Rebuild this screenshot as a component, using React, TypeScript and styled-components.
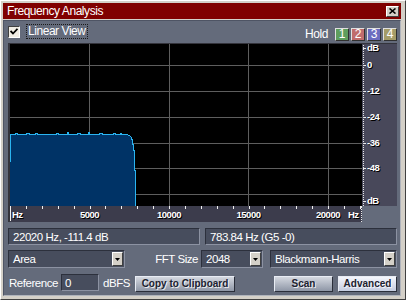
import styled, { createGlobalStyle } from "styled-components";

const SANS = `"Liberation Sans", Arial, sans-serif`;

const GlobalStyle = createGlobalStyle`
  html, body {
    margin: 0;
    padding: 0;
    background: #d4d0c8;
    overflow: hidden;
  }
  * {
    box-sizing: border-box;
  }
`;

const Window = styled.div`
  width: 406px;
  height: 300px;
  background: #d4d0c8;
  border: 1px solid;
  border-color: #ffffff #404040 #404040 #ffffff;
  padding: 2px 4px 3px 2px;
  display: flex;
  flex-direction: column;
  font-family: ${SANS};
  font-size: 11.5px;
  letter-spacing: -0.45px;
`;

const TitleBar = styled.div`
  height: 16px;
  flex: none;
  margin-bottom: 1px;
  padding: 0 2px 0 4px;
  background: #800000;
  color: #ffffff;
  font-size: 12px;
  display: flex;
  align-items: center;
  justify-content: space-between;
`;

const CloseButton = styled.div`
  width: 13px;
  height: 11px;
  background: #d4d0c8;
  border: 1px solid;
  border-color: #ffffff #404040 #404040 #ffffff;
  display: flex;
  align-items: center;
  justify-content: center;
`;

const Body = styled.div`
  flex: 1;
  background: #646b7b;
  border: 1px solid;
  border-color: #4e5464 #b0b4bc #b0b4bc #4e5464;
  padding: 2px 3px 2px 4px;
  display: flex;
  flex-direction: column;
  color: #ffffff;
`;

const TopRow = styled.div`
  height: 20px;
  flex: none;
  display: flex;
  justify-content: space-between;
  align-items: flex-start;
`;

const CheckWrap = styled.div`
  display: flex;
  align-items: center;
  margin-top: 1px;
`;

const Checkbox = styled.div`
  width: 12px;
  height: 12px;
  background: #f0ece4;
  border: 1px solid;
  border-color: #404040 #ffffff #ffffff #404040;
  display: flex;
  align-items: center;
  justify-content: center;
`;

const FocusLabel = styled.span`
  margin-left: 6px;
  padding: 0 2px 0 2px;
  height: 15px;
  line-height: 14px;
  font-size: 12px;
  outline: 1px dotted #1a1a1a;
  outline-offset: -1px;
`;

const HoldGroup = styled.div`
  display: flex;
  align-items: center;
  gap: 2px;
  margin-top: 4px;
`;

const HoldLabel = styled.span`
  margin-right: 5px;
  font-size: 12px;
`;

const holdColors: Record<string, string> = {
  green: "#5e9e5e",
  red: "#c06c6c",
  blue: "#6c6cc0",
  yellow: "#a49c68",
};

const HoldButton = styled.div<{ $color: string }>`
  width: 14px;
  height: 13px;
  background: ${(p) => holdColors[p.$color]};
  border: 1px solid;
  border-color: #e0e0e0 #303030 #303030 #e0e0e0;
  font-size: 12px;
  line-height: 11px;
  letter-spacing: 0;
  text-align: center;
`;

const Graph = styled.div`
  flex: none;
  display: grid;
  grid-template-columns: 354px 35px;
  grid-template-rows: 163px 16px;
`;

const Plot = styled.div`
  background: #000000;
  border-left: 2px solid #34343c;
  border-top: 1px solid #34343c;
  line-height: 0;
`;

const DbAxis = styled.div`
  position: relative;
  background: #48485a;
  border-top: 1px solid #34343c;
  &::before {
    content: "";
    position: absolute;
    left: 1px;
    top: 1px;
    bottom: 0;
    border-left: 1px dotted #e8e8e8;
  }
`;

const AxisText = styled.span`
  position: absolute;
  height: 10px;
  line-height: 10px;
  font-weight: bold;
  font-size: 9.5px;
  letter-spacing: -0.5px;
  color: #ffffff;
  text-shadow: 1px 1px 0 #000000;
  white-space: nowrap;
`;

const DbTick = styled.span`
  position: absolute;
  left: 1px;
  width: 3px;
  height: 1px;
  background: #e8e8e8;
`;

const HzAxis = styled.div`
  position: relative;
  background: #3c3c4c;
  border-left: 2px solid #34343c;
  &::after {
    content: "";
    position: absolute;
    right: 0;
    top: 0;
    bottom: 0;
    border-left: 1px dotted #e8e8e8;
  }
`;

const HzTick = styled.span<{ $long?: boolean }>`
  position: absolute;
  top: 0;
  width: 1px;
  height: ${(p) => (p.$long ? "15px" : "3px")};
  background: #f0f0f0;
`;

const Readouts = styled.div`
  margin-top: 6px;
  display: grid;
  grid-template-columns: 1fr 1fr;
  gap: 5px;
`;

const Sunken = styled.div`
  background: #474d5d;
  border: 1px solid;
  border-color: #2c303c #8c92a2 #8c92a2 #2c303c;
  display: flex;
  align-items: center;
  padding-left: 4px;
  color: #ffffff;
`;

const Readout = styled(Sunken)`
  height: 17px;
  padding-left: 4px;
`;

const OptionsRow = styled.div`
  margin-top: 5px;
  height: 18px;
  display: flex;
  align-items: center;
`;

const Select = styled(Sunken)<{ $w: number }>`
  width: ${(p) => p.$w}px;
  flex: none;
  height: 18px;
  justify-content: space-between;
  padding-right: 1px;
`;

const DropArrow = styled.div`
  width: 11px;
  height: 14px;
  background: #d4d0c8;
  border: 1px solid;
  border-color: #ffffff #404040 #404040 #ffffff;
  display: flex;
  align-items: center;
  justify-content: center;
`;

const Spacer = styled.div`
  flex: 1;
`;

const FieldLabel = styled.span`
  margin-right: 3px;
`;

const BottomRow = styled.div`
  margin-top: 4px;
  height: 21px;
  display: flex;
  align-items: center;
  padding-left: 1px;
`;

const NumberInput = styled(Sunken)`
  width: 38px;
  height: 17px;
  padding-left: 3px;
  margin-left: 3px;
`;

const Unit = styled.span`
  margin: 0 5px 0 4px;
`;

const Button = styled.div<{ $w: number; $active?: boolean }>`
  width: ${(p) => p.$w}px;
  flex: none;
  height: 16px;
  margin-top: 2px;
  border: 1px solid;
  border-color: #e8ecf4 #2a2e3a #2a2e3a #e8ecf4;
  background: ${(p) =>
    p.$active
      ? "linear-gradient(#f4f6fc, #c4cce0)"
      : "linear-gradient(#d4d8e0, #8e96a6)"};
  font-weight: bold;
  font-size: 10px;
  letter-spacing: 0;
  color: #1c2230;
  text-shadow: 1px 1px 0 rgba(255, 255, 255, 0.8);
  display: flex;
  align-items: center;
  justify-content: center;
  & + & {
    margin-left: 5px;
  }
`;

const PX_PER_HZ = 79.5 / 5000;
const gridY = [21, 47, 73, 99, 124, 150];
const gridX = [79, 159, 238, 318];

const dbLabels = [
  { text: "dB", y: 4 },
  { text: "0", y: 21 },
  { text: "-12", y: 47 },
  { text: "-24", y: 73 },
  { text: "-36", y: 99 },
  { text: "-48", y: 124 },
  { text: "dB", y: 157 },
];

// bumps on the top edge of the spectrum: [x, width, height]
const bumps: [number, number, number][] = [
  [5, 2, 1], [16, 3, 1], [25, 2, 1], [46, 2, 1], [57, 1, 2], [67, 3, 1],
  [78, 1, 2], [89, 3, 1], [103, 2, 1], [110, 1, 1],
];

function spectrumTop() {
  let d = "M0.5 90.5";
  for (const [x, w, h] of bumps) {
    d += ` H${x + 0.5} V${90.5 - h} H${x + w + 0.5} V90.5`;
  }
  d += " H116.5 L119.5 91.5 L121.5 93.5 L122.5 97.5 V100.5 H123.5 V106.5 H124.5 V126.5 H125.5 V162";
  return d;
}

function Spectrum() {
  const top = spectrumTop();
  return (
    <svg width="352" height="162" shapeRendering="crispEdges">
      {gridY.map((y) => (
        <line key={"h" + y} x1="0" x2="352" y1={y + 0.5} y2={y + 0.5} stroke="#5e5e5e" />
      ))}
      {gridX.map((x) => (
        <line key={"v" + x} y1="0" y2="162" x1={x + 0.5} x2={x + 0.5} stroke="#5e5e5e" />
      ))}
      <path d={top + " H0 Z"} fill="#003366" />
      <path d={"M0.5 118 V90.5 " + top.slice(top.indexOf("H"))} fill="none" stroke="#2ab4f0" />
    </svg>
  );
}

function Arrow() {
  return (
    <DropArrow>
      <svg width="5" height="3"><path d="M0 0 H5 L2.5 3 Z" fill="#000" /></svg>
    </DropArrow>
  );
}

function App() {
  const ticks = Array.from({ length: 23 }, (_, i) => i);
  return (
    <Window>
      <GlobalStyle />
      <TitleBar>
        <span>Frequency Analysis</span>
        <CloseButton>
          <svg width="7" height="6" viewBox="0 0 7 6">
            <path d="M0.5 0.5 L6.5 5.5 M6.5 0.5 L0.5 5.5" stroke="#000" strokeWidth="1.6" />
          </svg>
        </CloseButton>
      </TitleBar>
      <Body>
        <TopRow>
          <CheckWrap>
            <Checkbox>
              <svg width="8" height="7" viewBox="0 0 8 7">
                <path d="M0.5 3 L3 5.5 L7.5 0.8" stroke="#000" strokeWidth="1.8" fill="none" />
              </svg>
            </Checkbox>
            <FocusLabel>Linear View</FocusLabel>
          </CheckWrap>
          <HoldGroup>
            <HoldLabel>Hold</HoldLabel>
            <HoldButton $color="green">1</HoldButton>
            <HoldButton $color="red">2</HoldButton>
            <HoldButton $color="blue">3</HoldButton>
            <HoldButton $color="yellow">4</HoldButton>
          </HoldGroup>
        </TopRow>

        <Graph>
          <Plot>
            <Spectrum />
          </Plot>
          <DbAxis>
            {dbLabels.map((l, i) => (
              <span key={i}>
                <DbTick style={{ top: l.y }} />
                <AxisText style={{ top: l.y - 5, left: 5 }}>{l.text}</AxisText>
              </span>
            ))}
          </DbAxis>
          <HzAxis>
            {ticks.map((i) => (
              <HzTick key={i} $long={i === 0} style={{ left: Math.round(i * 1000 * PX_PER_HZ) }} />
            ))}
            <AxisText style={{ top: 4, left: 2 }}>Hz</AxisText>
            {[5000, 10000, 15000, 20000].map((f) => (
              <AxisText key={f} style={{ top: 4, left: f * PX_PER_HZ, transform: "translateX(-50%)" }}>
                {f}
              </AxisText>
            ))}
            <AxisText style={{ top: 4, left: 338 }}>Hz</AxisText>
          </HzAxis>
          <div />
        </Graph>

        <Readouts>
          <Readout>22020 Hz, -111.4 dB</Readout>
          <Readout>783.84 Hz (G5 -0)</Readout>
        </Readouts>

        <OptionsRow>
          <Select $w={117}>
            <span>Area</span>
            <Arrow />
          </Select>
          <Spacer />
          <FieldLabel>FFT Size</FieldLabel>
          <Select $w={62}>
            <span>2048</span>
            <Arrow />
          </Select>
          <Select $w={127} style={{ marginLeft: 7 }}>
            <span>Blackmann-Harris</span>
            <Arrow />
          </Select>
        </OptionsRow>

        <BottomRow>
          <span>Reference</span>
          <NumberInput>0</NumberInput>
          <Unit>dBFS</Unit>
          <Button $w={100}>Copy to Clipboard</Button>
          <Spacer />
          <Button $w={59}>Scan</Button>
          <Button $w={59} $active>Advanced</Button>
        </BottomRow>
      </Body>
    </Window>
  );
}

export default App;
